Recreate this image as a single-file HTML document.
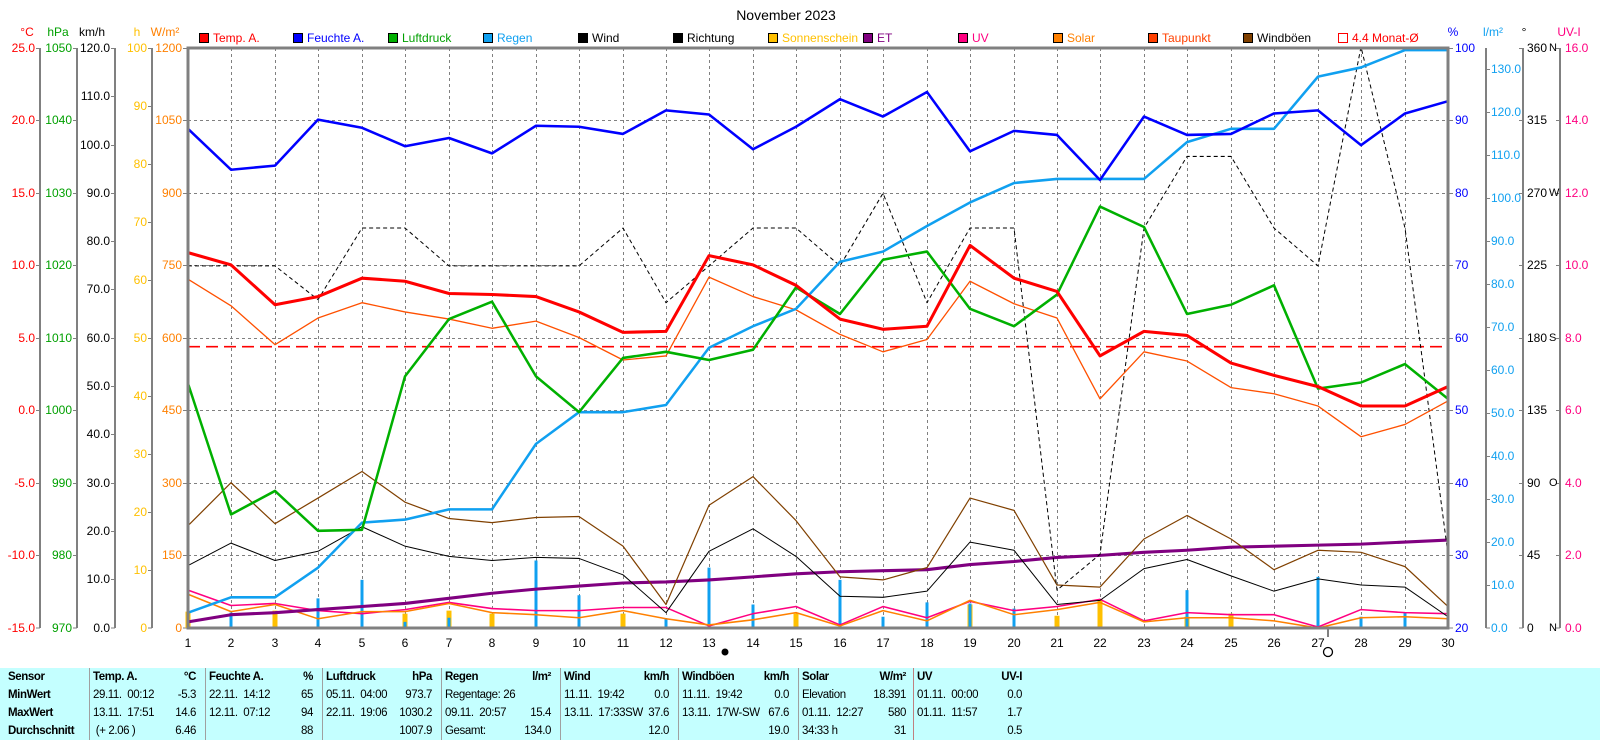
<!DOCTYPE html>
<html><head><meta charset="utf-8"><style>
html,body{margin:0;padding:0;background:#fff;width:1600px;height:740px;overflow:hidden}
svg{display:block;font-family:"Liberation Sans",Arial,sans-serif}
.t{position:absolute;left:0;top:668px;width:1600px;height:72px;background:#c4ffff;font-family:"Liberation Sans",Arial,sans-serif;font-size:11.5px;letter-spacing:-0.4px}
.c{position:absolute;top:0;height:72px;border-left:1px solid #a0a0a0}
.r{position:absolute;white-space:nowrap;line-height:18px}
b{font-weight:bold}
</style></head><body>
<svg width="1600" height="668" viewBox="0 0 1600 668" style="position:absolute;left:0;top:0">
<text x="786" y="20" font-size="14" text-anchor="middle">November 2023</text>
<g font-size="12">
<text x="27" y="36" fill="#ff0000" text-anchor="middle">°C</text>
<text x="58" y="36" fill="#00a000" text-anchor="middle">hPa</text>
<text x="92" y="36" fill="#000" text-anchor="middle">km/h</text>
<text x="137" y="36" fill="#ffc000" text-anchor="middle">h</text>
<text x="165" y="36" fill="#ff8000" text-anchor="middle">W/m²</text>
<text x="1453" y="36" fill="#0000ff" text-anchor="middle">%</text>
<text x="1493" y="36" fill="#10a0f0" text-anchor="middle">l/m²</text>
<text x="1524" y="36" fill="#000" text-anchor="middle">°</text>
<text x="1569" y="36" fill="#ff0080" text-anchor="middle">UV-I</text>
</g>
<g font-size="12">
<rect x="199.5" y="33.5" width="9" height="9" fill="#ff0000" stroke="#000"/><text x="213" y="42" fill="#ff0000">Temp. A.</text>
<rect x="293.5" y="33.5" width="9" height="9" fill="#0000ff" stroke="#000"/><text x="307" y="42" fill="#0000ff">Feuchte A.</text>
<rect x="388.5" y="33.5" width="9" height="9" fill="#00b000" stroke="#000"/><text x="402" y="42" fill="#00a000">Luftdruck</text>
<rect x="483.5" y="33.5" width="9" height="9" fill="#10a0f0" stroke="#000"/><text x="497" y="42" fill="#10a0f0">Regen</text>
<rect x="578.5" y="33.5" width="9" height="9" fill="#000" stroke="#000"/><text x="592" y="42" fill="#000">Wind</text>
<rect x="673.5" y="33.5" width="9" height="9" fill="#000" stroke="#000"/><text x="687" y="42" fill="#000">Richtung</text>
<rect x="768.5" y="33.5" width="9" height="9" fill="#ffc000" stroke="#000"/><text x="782" y="42" fill="#ffc000">Sonnenschein</text>
<rect x="863.5" y="33.5" width="9" height="9" fill="#800080" stroke="#000"/><text x="877" y="42" fill="#800080">ET</text>
<rect x="958.5" y="33.5" width="9" height="9" fill="#ff0080" stroke="#000"/><text x="972" y="42" fill="#ff0080">UV</text>
<rect x="1053.5" y="33.5" width="9" height="9" fill="#ff8000" stroke="#000"/><text x="1067" y="42" fill="#ff8000">Solar</text>
<rect x="1148.5" y="33.5" width="9" height="9" fill="#ff4000" stroke="#000"/><text x="1162" y="42" fill="#ff4000">Taupunkt</text>
<rect x="1243.5" y="33.5" width="9" height="9" fill="#804000" stroke="#000"/><text x="1257" y="42" fill="#000">Windböen</text>
<rect x="1338.5" y="33.5" width="9" height="9" fill="#fff" stroke="#ff0000"/><text x="1352" y="42" fill="#ff0000">4.4 Monat-Ø</text>
</g>
<g stroke="#808080" stroke-width="2">
<line x1="40" y1="48" x2="40" y2="628"/><line x1="77" y1="48" x2="77" y2="628"/>
<line x1="115" y1="48" x2="115" y2="628"/><line x1="152" y1="48" x2="152" y2="628"/>
<line x1="1486" y1="48" x2="1486" y2="628"/><line x1="1523" y1="48" x2="1523" y2="628"/>
<line x1="1560" y1="48" x2="1560" y2="628"/>
</g>
<g stroke="#808080" stroke-width="1" stroke-dasharray="3,3">
<path d="M231.5 48V628M275.5 48V628M318.5 48V628M362.5 48V628M405.5 48V628M449.5 48V628M492.5 48V628M536.5 48V628M579.5 48V628M623.5 48V628M666.5 48V628M709.5 48V628M753.5 48V628M796.5 48V628M840.5 48V628M883.5 48V628M927.5 48V628M970.5 48V628M1014.5 48V628M1057.5 48V628M1100.5 48V628M1144.5 48V628M1187.5 48V628M1231.5 48V628M1274.5 48V628M1318.5 48V628M1361.5 48V628M1405.5 48V628"/>
<path d="M188 120.5H1448M188 193.5H1448M188 265.5H1448M188 338.5H1448M188 410.5H1448M188 483.5H1448M188 555.5H1448"/>
</g>
<g stroke="#808080" stroke-width="1">
<path d="M36 48.5h4M36 120.5h4M36 193.5h4M36 265.5h4M36 338.5h4M36 410.5h4M36 483.5h4M36 555.5h4M36 628h4"/>
<path d="M73 48.5h4M73 120.5h4M73 193.5h4M73 265.5h4M73 338.5h4M73 410.5h4M73 483.5h4M73 555.5h4M73 628h4"/>
<path d="M111 48.5h4M111 96.5h4M111 145.5h4M111 193.5h4M111 241.5h4M111 289.5h4M111 338.5h4M111 386.5h4M111 434.5h4M111 483.5h4M111 531.5h4M111 579.5h4M111 628h4"/>
<path d="M148 48.5h4M148 106.5h4M148 164.5h4M148 222.5h4M148 280.5h4M148 338.5h4M148 396.5h4M148 454.5h4M148 512.5h4M148 570.5h4M148 628h4"/>
<path d="M183 48.5h5M183 120.5h5M183 193.5h5M183 265.5h5M183 338.5h5M183 410.5h5M183 483.5h5M183 555.5h5M183 628h5"/>
<path d="M1448 48.5h5M1448 120.5h5M1448 193.5h5M1448 265.5h5M1448 338.5h5M1448 410.5h5M1448 483.5h5M1448 555.5h5M1448 628h5"/>
<path d="M1486 69.5h4M1486 112.5h4M1486 155.5h4M1486 198.5h4M1486 241.5h4M1486 284.5h4M1486 327.5h4M1486 370.5h4M1486 413.5h4M1486 456.5h4M1486 499.5h4M1486 542.5h4M1486 585.5h4M1486 628h4"/>
<path d="M1519 48.5h4M1519 120.5h4M1519 193.5h4M1519 265.5h4M1519 338.5h4M1519 410.5h4M1519 483.5h4M1519 555.5h4M1519 628h4"/>
<path d="M1556 48.5h4M1556 120.5h4M1556 193.5h4M1556 265.5h4M1556 338.5h4M1556 410.5h4M1556 483.5h4M1556 555.5h4M1556 628h4"/>
</g>
<g font-size="12" dominant-baseline="central">
<g fill="#ff0000" text-anchor="end"><text x="35" y="48">25.0</text><text x="35" y="120">20.0</text><text x="35" y="193">15.0</text><text x="35" y="265">10.0</text><text x="35" y="338">5.0</text><text x="35" y="410">0.0</text><text x="35" y="483">-5.0</text><text x="35" y="555">-10.0</text><text x="35" y="628">-15.0</text></g>
<g fill="#00a000" text-anchor="end"><text x="72" y="48">1050</text><text x="72" y="120">1040</text><text x="72" y="193">1030</text><text x="72" y="265">1020</text><text x="72" y="338">1010</text><text x="72" y="410">1000</text><text x="72" y="483">990</text><text x="72" y="555">980</text><text x="72" y="628">970</text></g>
<g fill="#000" text-anchor="end"><text x="110" y="48">120.0</text><text x="110" y="96">110.0</text><text x="110" y="145">100.0</text><text x="110" y="193">90.0</text><text x="110" y="241">80.0</text><text x="110" y="289">70.0</text><text x="110" y="338">60.0</text><text x="110" y="386">50.0</text><text x="110" y="434">40.0</text><text x="110" y="483">30.0</text><text x="110" y="531">20.0</text><text x="110" y="579">10.0</text><text x="110" y="628">0.0</text></g>
<g fill="#ffc000" text-anchor="end"><text x="147" y="48">100</text><text x="147" y="106">90</text><text x="147" y="164">80</text><text x="147" y="222">70</text><text x="147" y="280">60</text><text x="147" y="338">50</text><text x="147" y="396">40</text><text x="147" y="454">30</text><text x="147" y="512">20</text><text x="147" y="570">10</text><text x="147" y="628">0</text></g>
<g fill="#ff8000" text-anchor="end"><text x="182" y="48">1200</text><text x="182" y="120">1050</text><text x="182" y="193">900</text><text x="182" y="265">750</text><text x="182" y="338">600</text><text x="182" y="410">450</text><text x="182" y="483">300</text><text x="182" y="555">150</text><text x="182" y="628">0</text></g>
<g fill="#0000ff"><text x="1455" y="48">100</text><text x="1455" y="120">90</text><text x="1455" y="193">80</text><text x="1455" y="265">70</text><text x="1455" y="338">60</text><text x="1455" y="410">50</text><text x="1455" y="483">40</text><text x="1455" y="555">30</text><text x="1455" y="628">20</text></g>
<g fill="#10a0f0"><text x="1491" y="69">130.0</text><text x="1491" y="112">120.0</text><text x="1491" y="155">110.0</text><text x="1491" y="198">100.0</text><text x="1491" y="241">90.0</text><text x="1491" y="284">80.0</text><text x="1491" y="327">70.0</text><text x="1491" y="370">60.0</text><text x="1491" y="413">50.0</text><text x="1491" y="456">40.0</text><text x="1491" y="499">30.0</text><text x="1491" y="542">20.0</text><text x="1491" y="585">10.0</text><text x="1491" y="628">0.0</text></g>
<g fill="#000"><text x="1527" y="48">360</text><text x="1527" y="120">315</text><text x="1527" y="193">270</text><text x="1527" y="265">225</text><text x="1527" y="338">180</text><text x="1527" y="410">135</text><text x="1527" y="483">90</text><text x="1527" y="555">45</text><text x="1527" y="628">0</text>
<text x="1549" y="48" font-size="11">N</text><text x="1549" y="193" font-size="11">W</text><text x="1549" y="338" font-size="11">S</text><text x="1549" y="483" font-size="11">O</text><text x="1549" y="628" font-size="11">N</text></g>
<g fill="#ff0080"><text x="1565" y="48">16.0</text><text x="1565" y="120">14.0</text><text x="1565" y="193">12.0</text><text x="1565" y="265">10.0</text><text x="1565" y="338">8.0</text><text x="1565" y="410">6.0</text><text x="1565" y="483">4.0</text><text x="1565" y="555">2.0</text><text x="1565" y="628">0.0</text></g>
</g>
<g font-size="12" text-anchor="middle" fill="#000">
<text x="188" y="647">1</text><text x="231" y="647">2</text><text x="275" y="647">3</text><text x="318" y="647">4</text><text x="362" y="647">5</text><text x="405" y="647">6</text><text x="449" y="647">7</text><text x="492" y="647">8</text><text x="536" y="647">9</text><text x="579" y="647">10</text><text x="623" y="647">11</text><text x="666" y="647">12</text><text x="709" y="647">13</text><text x="753" y="647">14</text><text x="796" y="647">15</text><text x="840" y="647">16</text><text x="883" y="647">17</text><text x="927" y="647">18</text><text x="970" y="647">19</text><text x="1014" y="647">20</text><text x="1057" y="647">21</text><text x="1100" y="647">22</text><text x="1144" y="647">23</text><text x="1187" y="647">24</text><text x="1231" y="647">25</text><text x="1274" y="647">26</text><text x="1318" y="647">27</text><text x="1361" y="647">28</text><text x="1405" y="647">29</text><text x="1448" y="647">30</text>
</g>
<circle cx="725" cy="652" r="3.5" fill="#000"/>
<circle cx="1328" cy="652" r="4.5" fill="none" stroke="#000" stroke-width="1.3"/>
<line x1="1328" y1="629" x2="1328" y2="637" stroke="#000"/>

<g transform="matrix(1,0,0,1.02293,0,-1.1)" fill="none" stroke-linejoin="round">
<g stroke="#ffc000" stroke-width="5">
<path d="M188 615V599M275 615V598M405 615V601M449 615V598M492 615V601M623 615V601M796 615V601M970 615V592M1057 615V603M1100 615V587M1187 615V604M1231 615V601"/>
</g>
<g stroke="#10a0f0" stroke-width="3">
<path d="M188 615V598M231 615V600M318 615V586M362 615V568M405 615V609M449 615V605M536 615V549M579 615V583M666 615V606M709 615V556M753 615V592M840 615V568M883 615V604M927 615V590M970 615V591M1014 615V596M1187 615V578M1318 615V565M1361 615V604M1405 615V600"/>
</g>
<line x1="188" y1="340" x2="1448" y2="340" stroke="#ff0000" stroke-width="1.5" stroke-dasharray="12,6"/>
<polyline stroke="#ff0080" stroke-width="1.5" points="188,578 231,593 275,591 318,598 362,601 405,597 449,590 492,596 536,598 579,598 623,595 666,595 709,613 753,601 796,594 840,612 883,594 927,605 970,589 1014,598 1057,594 1100,587 1144,608 1187,600 1231,602 1274,602 1318,614 1361,597 1405,600 1448,601"/>
<polyline stroke="#ff8000" stroke-width="1.5" points="188,582 231,599 275,592 318,606 362,599 405,599 449,591 492,600 536,602 579,605 623,598 666,606 709,612 753,607 796,600 840,613 883,598 927,608 970,588 1014,602 1057,597 1100,590 1144,609 1187,605 1231,605 1274,608 1318,615 1361,605 1405,604 1448,606"/>
<polyline stroke="#800080" stroke-width="3" points="188,609 231,602 275,600 318,597 362,594 405,591 449,586 492,581 536,577 579,574 623,571 666,570 709,568 753,565 796,562 840,560 883,559 927,558 970,553 1014,550 1057,546 1100,544 1144,541 1187,539 1231,536 1274,535 1318,534 1361,533 1405,531 1448,529"/>
<polyline stroke="#000" stroke-width="1" points="188,554 231,532 275,549 318,540 362,516 405,535 449,545 492,549 536,546 579,547 623,563 666,600 709,540 753,518 796,545 840,584 883,585 927,579 970,531 1014,539 1057,592 1100,588 1144,557 1187,548 1231,564 1274,579 1318,567 1361,573 1405,575 1448,604"/>
<polyline stroke="#804000" stroke-width="1.2" points="188,515 231,473 275,513 318,488 362,462 405,492 449,508 492,512 536,507 579,506 623,535 666,592 709,495 753,467 796,510 840,565 883,568 927,556 970,488 1014,500 1057,573 1100,575 1144,528 1187,505 1231,528 1274,558 1318,539 1361,541 1405,555 1448,594"/>
<polyline stroke="#000" stroke-width="1" stroke-dasharray="4,3" points="188,261 231,261 275,261 318,294 362,224 405,224 449,261 492,261 536,261 579,261 623,224 666,297 709,261 753,224 796,224 840,261 883,190 927,297 970,224 1014,224 1057,578 1100,543 1144,224 1187,154 1231,154 1274,224 1318,261 1361,47 1405,224 1448,543"/>
<polyline stroke="#ff5000" stroke-width="1.3" points="188,274 231,300 275,338 318,312 362,297 405,306 449,313 492,322 536,315 579,331 623,353 666,349 709,272 753,291 796,304 840,328 883,345 927,333 970,276 1014,298 1057,312 1100,391 1144,345 1187,354 1231,380 1274,386 1318,398 1361,428 1405,416 1448,393"/>
<polyline stroke="#10a0f0" stroke-width="2.5" points="188,600 231,585 275,585 318,556 362,512 405,509 449,499 492,499 536,435 579,404 623,404 666,397 709,341 753,320 796,303 840,257 883,247 927,222 970,199 1014,180 1057,176 1100,176 1144,176 1187,140 1231,127 1274,127 1318,76 1361,67 1405,50 1448,50"/>
<polyline stroke="#00b000" stroke-width="2.5" points="188,376 231,504 275,481 318,520 362,519 405,369 449,313 492,296 536,369 579,404 623,351 666,345 709,353 753,343 796,282 840,308 883,255 927,247 970,303 1014,320 1057,289 1100,203 1144,223 1187,308 1231,299 1274,280 1318,381 1361,375 1405,357 1448,391"/>
<polyline stroke="#0000ff" stroke-width="2.5" points="188,127 231,167 275,163 318,118 362,126 405,144 449,136 492,151 536,124 579,125 623,132 666,109 709,113 753,147 796,125 840,98 883,115 927,91 970,149 1014,129 1057,133 1100,177 1144,115 1187,133 1231,132 1274,112 1318,109 1361,143 1405,112 1448,100"/>
<polyline stroke="#ff0000" stroke-width="3" points="188,248 231,260 275,299 318,291 362,273 405,276 449,288 492,289 536,291 579,306 623,326 666,325 709,251 753,260 796,280 840,313 883,323 927,320 970,241 1014,273 1057,286 1100,349 1144,325 1187,329 1231,356 1274,368 1318,379 1361,398 1405,398 1448,379"/>
</g>
<rect x="188" y="48" width="1260" height="580" fill="none" stroke="#808080" stroke-width="3"/>
</svg>
<div class="t">
<div class="c" style="left:89px"></div><div class="c" style="left:205px"></div><div class="c" style="left:322px"></div><div class="c" style="left:441px"></div><div class="c" style="left:560px"></div><div class="c" style="left:678px"></div><div class="c" style="left:798px"></div><div class="c" style="left:913px;border-color:#c08080"></div>
<div class="r" style="left:8px;top:0"><b>Sensor</b><br><b>MinWert</b><br><b>MaxWert</b><br><b>Durchschnitt</b></div>
<div class="r" style="left:93px"><b>Temp. A.</b><br>29.11.&nbsp; 00:12<br>13.11.&nbsp; 17:51<br>&nbsp;(+ 2.06 )</div>
<div class="r" style="right:1404px;text-align:right"><b>°C</b><br>-5.3<br>14.6<br>6.46</div>
<div class="r" style="left:209px"><b>Feuchte A.</b><br>22.11.&nbsp; 14:12<br>12.11.&nbsp; 07:12<br>&nbsp;</div>
<div class="r" style="right:1287px;text-align:right"><b>%</b><br>65<br>94<br>88</div>
<div class="r" style="left:326px"><b>Luftdruck</b><br>05.11.&nbsp; 04:00<br>22.11.&nbsp; 19:06<br>&nbsp;</div>
<div class="r" style="right:1168px;text-align:right"><b>hPa</b><br>973.7<br>1030.2<br>1007.9</div>
<div class="r" style="left:445px"><b>Regen</b><br>Regentage: 26<br>09.11.&nbsp; 20:57<br>Gesamt:</div>
<div class="r" style="right:1049px;text-align:right"><b>l/m²</b><br>&nbsp;<br>15.4<br>134.0</div>
<div class="r" style="left:564px"><b>Wind</b><br>11.11.&nbsp; 19:42<br>13.11.&nbsp; 17:33SW<br>&nbsp;</div>
<div class="r" style="right:931px;text-align:right"><b>km/h</b><br>0.0<br>37.6<br>12.0</div>
<div class="r" style="left:682px"><b>Windböen</b><br>11.11.&nbsp; 19:42<br>13.11.&nbsp; 17W-SW<br>&nbsp;</div>
<div class="r" style="right:811px;text-align:right"><b>km/h</b><br>0.0<br>67.6<br>19.0</div>
<div class="r" style="left:802px"><b>Solar</b><br>Elevation<br>01.11.&nbsp; 12:27<br>34:33 h</div>
<div class="r" style="right:694px;text-align:right"><b>W/m²</b><br>18.391<br>580<br>31</div>
<div class="r" style="left:917px"><b>UV</b><br>01.11.&nbsp; 00:00<br>01.11.&nbsp; 11:57<br>&nbsp;</div>
<div class="r" style="right:578px;text-align:right"><b>UV-I</b><br>0.0<br>1.7<br>0.5</div>
</div>
</body></html>
